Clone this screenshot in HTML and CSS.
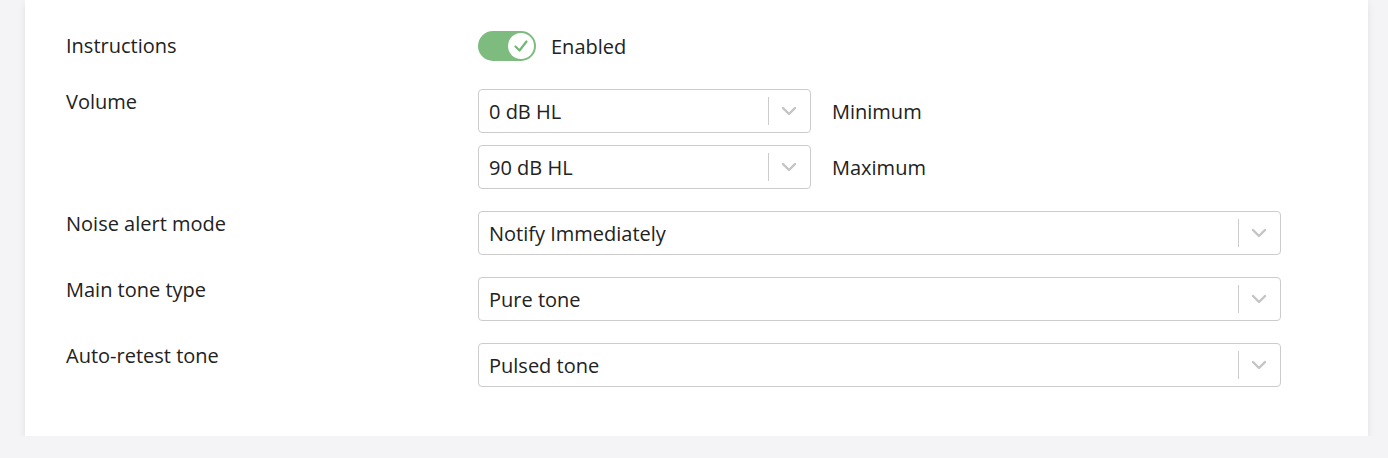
FILE: index.html
```html
<!DOCTYPE html>
<html lang="en">
  <head>
    <meta charset="UTF-8" />
    <meta name="viewport" content="width=device-width, initial-scale=1.0" />
    <title>Test settings</title>
    <link rel="stylesheet" href="styles.css">
  </head>
  <body>
    <div class="card">
      <div class="row row-toggle">
        <div class="label">Instructions</div>
        <div class="control toggle-wrap">
          <span class="toggle">
            <span class="knob">
              <svg width="18" height="18" viewBox="0 0 18 18">
                <polyline points="3.5,9.5 7.5,13.5 14.5,4.5" fill="none" stroke="#74b677" stroke-width="2.2" stroke-linecap="round" stroke-linejoin="round" />
              </svg>
            </span>
          </span>
          <span class="toggle-text">Enabled</span>
        </div>
      </div>

      <div class="row">
        <div class="label">Volume</div>
        <div class="control stack">
          <div class="inline">
            <div class="select small">
              <span class="value">0 dB HL</span>
              <span class="sep"></span>
              <svg class="chev" width="16" height="10" viewBox="0 0 16 10"><polyline points="2,2 8,8 14,2" /></svg>
            </div>
            <span class="suffix">Minimum</span>
          </div>
          <div class="inline">
            <div class="select small">
              <span class="value">90 dB HL</span>
              <span class="sep"></span>
              <svg class="chev" width="16" height="10" viewBox="0 0 16 10"><polyline points="2,2 8,8 14,2" /></svg>
            </div>
            <span class="suffix">Maximum</span>
          </div>
        </div>
      </div>

      <div class="row">
        <div class="label">Noise alert mode</div>
        <div class="control">
          <div class="select wide">
            <span class="value">Notify Immediately</span>
            <span class="sep"></span>
            <svg class="chev" width="16" height="10" viewBox="0 0 16 10"><polyline points="2,2 8,8 14,2" /></svg>
          </div>
        </div>
      </div>

      <div class="row">
        <div class="label">Main tone type</div>
        <div class="control">
          <div class="select wide">
            <span class="value">Pure tone</span>
            <span class="sep"></span>
            <svg class="chev" width="16" height="10" viewBox="0 0 16 10"><polyline points="2,2 8,8 14,2" /></svg>
          </div>
        </div>
      </div>

      <div class="row">
        <div class="label">Auto-retest tone</div>
        <div class="control">
          <div class="select wide">
            <span class="value">Pulsed tone</span>
            <span class="sep"></span>
            <svg class="chev" width="16" height="10" viewBox="0 0 16 10"><polyline points="2,2 8,8 14,2" /></svg>
          </div>
        </div>
      </div>
    </div>
  </body>
</html>
```

FILE: styles.css
```css
body {
  font-family: "Open Sans", Arial, sans-serif;
  margin: 0;
  padding: 0;
  background-color: #f4f4f6;
  color: #222222;
  font-size: 20px;
}

.card {
  background-color: #ffffff;
  margin: 0 20px 0 25px;
  padding: 25px 41px 49px 41px;
  box-shadow: 0 3px 8px rgba(0, 0, 0, 0.08);
  display: flex;
  flex-direction: column;
  gap: 22px;
}

.row {
  display: flex;
  align-items: flex-start;
}

.row-toggle {
  align-items: center;
  height: 42px;
}

.label {
  width: 412px;
  flex-shrink: 0;
  line-height: 26px;
}

.control {
  flex: 1;
}

.toggle-wrap {
  display: flex;
  align-items: center;
  gap: 15px;
}

.toggle {
  width: 58px;
  height: 30px;
  border-radius: 15px;
  background-color: #7dbb7f;
  display: flex;
  align-items: center;
  justify-content: flex-end;
  padding-right: 2px;
  box-sizing: border-box;
}

.knob {
  width: 26px;
  height: 26px;
  border-radius: 50%;
  background-color: #ffffff;
  display: flex;
  align-items: center;
  justify-content: center;
}

.stack {
  display: flex;
  flex-direction: column;
  gap: 12px;
}

.inline {
  display: flex;
  align-items: center;
  gap: 21px;
}

.select {
  height: 44px;
  box-sizing: border-box;
  border: 1px solid #cccccc;
  border-radius: 4px;
  background-color: #ffffff;
  display: flex;
  align-items: center;
  padding-left: 10px;
}

.select.small {
  width: 333px;
}

.select.wide {
  width: 803px;
}

.value {
  flex: 1;
}

.sep {
  width: 1px;
  height: 28px;
  background-color: #cccccc;
}

.chev {
  margin: 0 13px 0 12px;
  fill: none;
  stroke: #c4c4c4;
  stroke-width: 2.4;
  stroke-linecap: round;
  stroke-linejoin: round;
}
```
